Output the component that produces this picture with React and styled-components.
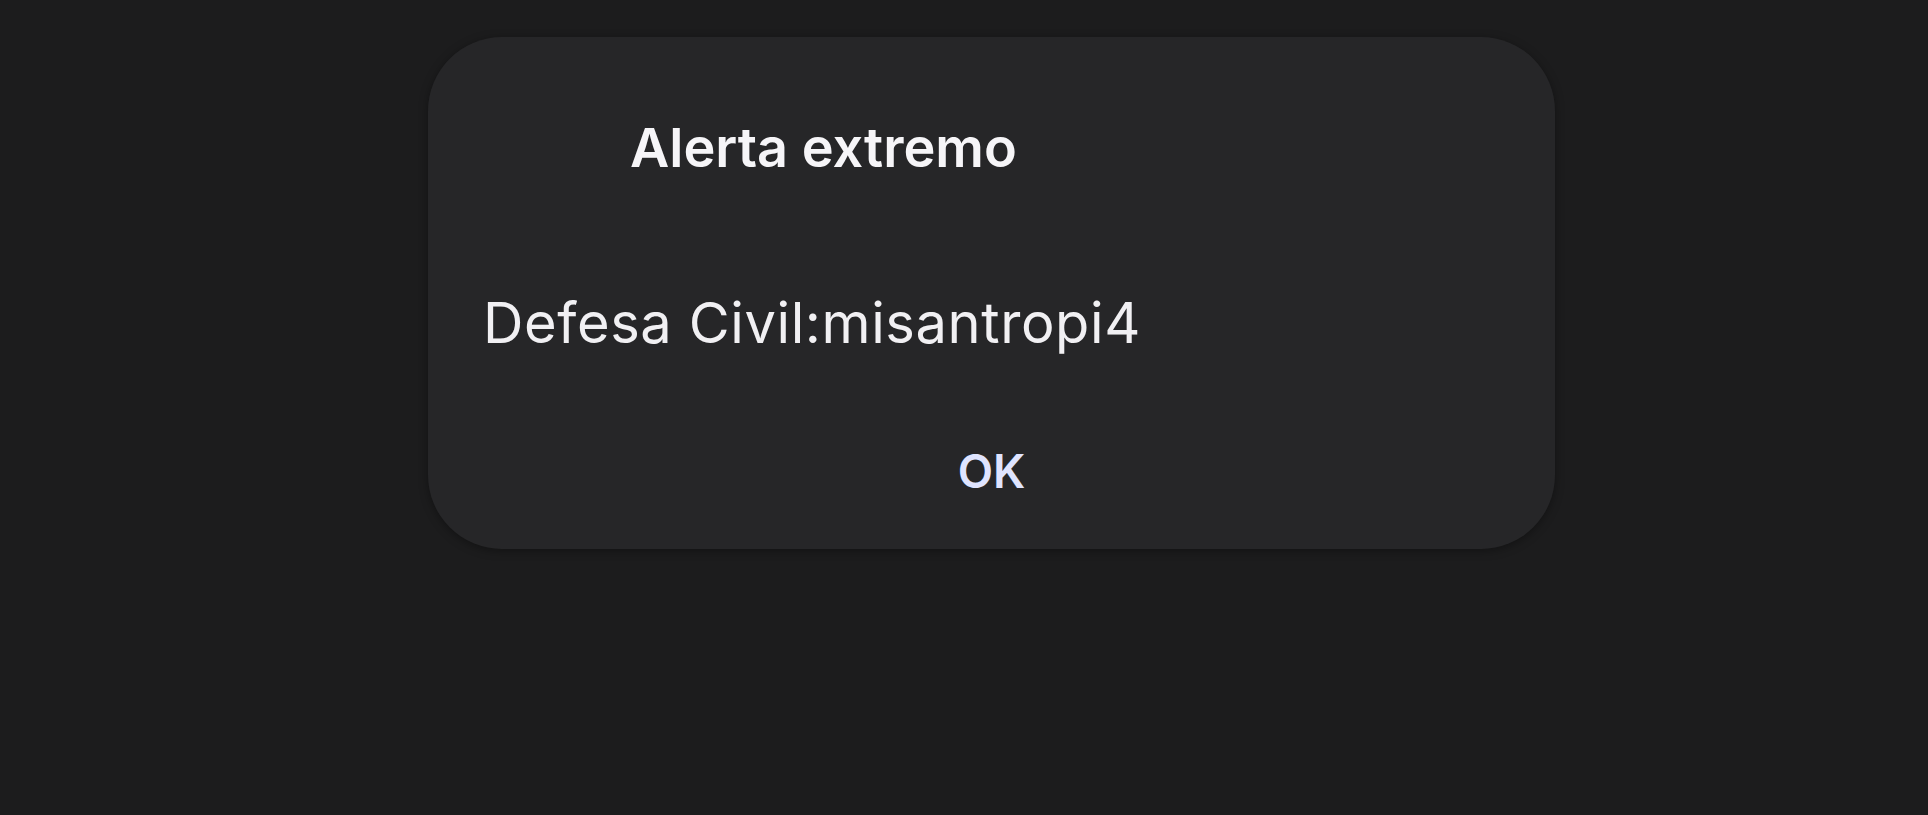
import React from "react"
import styled, { createGlobalStyle } from "styled-components"

const GlobalStyle = createGlobalStyle`
  html, body {
    margin: 0;
    padding: 0;
    background: #1c1c1d;
  }
  body {
    font-family: Inter, Roboto, "Noto Sans", "Liberation Sans", sans-serif;
    -webkit-font-smoothing: antialiased;
  }
`

const Screen = styled.main`
  width: 100%;
  min-height: 815px;
  box-sizing: border-box;
  padding: 37px 0 0 428px;
  background: #1c1c1d;
`

const Dialog = styled.section`
  width: 1127px;
  height: 512px;
  box-sizing: border-box;
  padding: 78px 59px 0;
  display: flex;
  flex-direction: column;
  border-radius: 74px;
  background: #262628;
  box-shadow: 0 2px 10px rgba(0, 0, 0, 0.35);
`

const Title = styled.h1`
  margin: 0 0 0 143px;
  font-size: 54px;
  line-height: 66px;
  font-weight: 600;
  color: #f6f5f8;
`

const Message = styled.p`
  margin: 108px 0 0 -4px;
  font-size: 56px;
  line-height: 68px;
  letter-spacing: 0.6px;
  font-weight: 400;
  color: #f1f0f3;
`

const Actions = styled.div`
  margin-top: 86px;
  display: flex;
  justify-content: center;
`

const ActionButton = styled.button`
  border: 0;
  padding: 0;
  background: none;
  font-family: inherit;
  font-size: 46px;
  line-height: 56px;
  font-weight: 600;
  color: #dfe4ff;
  cursor: pointer;
`

const App = () => (
  <>
    <GlobalStyle />
    <Screen>
      <Dialog role="alertdialog">
        <Title>Alerta extremo</Title>
        <Message>Defesa Civil:misantropi4</Message>
        <Actions>
          <ActionButton>OK</ActionButton>
        </Actions>
      </Dialog>
    </Screen>
  </>
)

export default App
